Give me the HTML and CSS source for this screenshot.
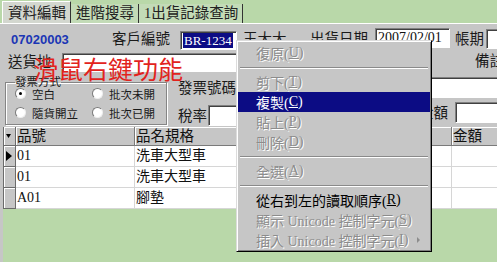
FILE: index.html
```html
<!DOCTYPE html>
<html lang="zh-Hant">
<head>
    <meta charset="UTF-8">
    <title>出貨資料編輯</title>
    <link rel="stylesheet" href="styles.css">
</head>
<body>
    <div class="window">
        <!-- Tabs -->
        <div class="tabs">
            <div class="tab active">資料編輯</div>
            <div class="tab">進階搜尋</div>
            <div class="tab">1出貨記錄查詢</div>
        </div>

        <!-- Header form -->
        <div class="form">
            <div class="row row1">
                <span class="order-no">07020003</span>
                <span class="lbl w-cust">客戶編號</span>
                <span class="field f-cust"><span class="sel">BR-1234</span></span>
                <span class="lbl w-name">王大大</span>
                <span class="lbl w-date">出貨日期</span>
                <span class="field f-date">2007/02/01</span>
                <span class="lbl w-term">帳期</span>
                <span class="field f-term"></span>
            </div>
            <div class="row row2">
                <span class="lbl w-addr">送貨地</span>
                <span class="field f-addr"></span>
                <span class="lbl memo-lbl">備註</span>
            </div>
            <div class="row row3">
                <fieldset class="invoice">
                    <legend>發票方式</legend>
                    <div class="radios">
                        <span class="radio"><span class="dot on"></span>空白</span>
                        <span class="radio"><span class="dot"></span>批次未開</span>
                        <span class="radio"><span class="dot"></span>隨貨開立</span>
                        <span class="radio"><span class="dot"></span>批次已開</span>
                    </div>
                </fieldset>
                <div class="mid">
                    <div class="lbl inv-no">發票號碼</div>
                    <div class="tax">
                        <span class="lbl">稅率</span>
                        <span class="field f-tax"></span>
                    </div>
                </div>
                <div class="side">
                    <span class="field f-memo"></span>
                    <div class="amt">
                        <span class="lbl">金額</span>
                        <span class="field f-amt"></span>
                    </div>
                </div>
            </div>
        </div>

        <!-- Detail grid -->
        <div class="lower">
            <table class="grid">
                <colgroup>
                    <col style="width:12px">
                    <col style="width:119px">
                    <col style="width:165px">
                    <col style="width:100px">
                    <col style="width:52px">
                    <col style="width:80px">
                </colgroup>
                <tr>
                    <th class="rh"><svg width="5" height="4" viewBox="0 0 5 4"><path d="M0 0h5L2.5 4z" fill="#000"/></svg></th>
                    <th>品號</th>
                    <th>品名規格</th>
                    <th>數量</th>
                    <th>單價</th>
                    <th>金額</th>
                </tr>
                <tr>
                    <td class="rh"><svg width="6" height="10" viewBox="0 0 6 10"><path d="M0 0L6 5L0 10z" fill="#000"/></svg></td>
                    <td>01</td>
                    <td>洗車大型車</td>
                    <td></td>
                    <td></td>
                    <td></td>
                </tr>
                <tr>
                    <td class="rh"></td>
                    <td>01</td>
                    <td>洗車大型車</td>
                    <td></td>
                    <td></td>
                    <td></td>
                </tr>
                <tr>
                    <td class="rh"></td>
                    <td>A01</td>
                    <td>腳墊</td>
                    <td></td>
                    <td></td>
                    <td></td>
                </tr>
            </table>
        </div>

        <div class="caption">滑鼠右鍵功能</div>

        <!-- Context menu -->
        <div class="menu">
            <div class="menu-item off">復原(<u>U</u>)</div>
            <div class="menu-sep"></div>
            <div class="menu-item off">剪下(<u>T</u>)</div>
            <div class="menu-item hot">複製(<u>C</u>)</div>
            <div class="menu-item off">貼上(<u>P</u>)</div>
            <div class="menu-item off">刪除(<u>D</u>)</div>
            <div class="menu-sep"></div>
            <div class="menu-item off">全選(<u>A</u>)</div>
            <div class="menu-sep"></div>
            <div class="menu-item">從右到左的讀取順序(<u>R</u>)</div>
            <div class="menu-item off">顯示 Unicode 控制字元(<u>S</u>)</div>
            <div class="menu-item off">插入 Unicode 控制字元(<u>I</u>)<span class="sub-arrow"></span></div>
        </div>
    </div>
</body>
</html>
```

FILE: styles.css
```css
body {
    margin: 0;
    font-family: "Liberation Serif", "Noto Sans CJK TC", serif;
    font-size: 14px;
    color: #111;
}
.window {
    position: relative;
    width: 497px;
    height: 262px;
    overflow: hidden;
    background: #b9d8a9;
}

/* tabs */
.tabs {
    display: flex;
    align-items: flex-end;
    height: 23px;
    padding-left: 2px;
}
.tab {
    height: 19px;
    line-height: 19px;
    padding: 0 4px 0 5px;
    font-size: 14.5px;
    color: #222;
    background: #c3dbb7;
    border-right: 1px solid #333;
    box-sizing: border-box;
    white-space: nowrap;
}
.tab.active {
    height: 22px;
    line-height: 22px;
    background: #d3d7cf;
    border-left: 1px solid #fff;
    border-top: 1px solid #fff;
}

/* form */
.form {
    height: 104px;
    background: #c6c6c6;
    border-top: 1px solid #fff;
    box-sizing: border-box;
}
.row {
    display: flex;
    align-items: center;
}
.row > * {
    flex-shrink: 0;
}
.row1 {
    height: 22px;
    margin-top: 4px;
}
.row2 {
    height: 20px;
    margin-top: 2px;
}
.row3 {
    height: 55px;
    align-items: flex-start;
}
.lbl {
    font-size: 14.5px;
    line-height: 16px;
    white-space: nowrap;
    color: #1a1a1a;
}
.field {
    display: block;
    height: 20px;
    background: #fff;
    box-sizing: border-box;
    border: 1px solid;
    border-color: #808080 #fff #fff #808080;
    box-shadow: inset 1px 1px #404040;
    white-space: nowrap;
    overflow: hidden;
}
.order-no {
    width: 112px;
    padding-left: 11px;
    box-sizing: border-box;
    font-family: "Liberation Sans", sans-serif;
    font-weight: bold;
    font-size: 13px;
    color: #1b36b5;
}
.w-cust { width: 68px; }
.f-cust {
    width: 57px;
    height: 19px;
    margin-top: 2px;
    padding: 1px 0 0 2px;
}
.sel {
    display: inline-block;
    background: #0c0c84;
    color: #fff;
    font-size: 13px;
    line-height: 15px;
    padding: 0 1px;
}
.w-name {
    width: 67px;
    margin-left: 6px;
}
.w-date { width: 65px; }
.f-date {
    width: 75px;
    margin-top: -2px;
    padding: 1px 0 0 2px;
    font-size: 14px;
    line-height: 16px;
}
.w-term {
    width: 31px;
    margin-left: 5px;
}
.f-term { width: 40px; }
.w-addr {
    width: 54px;
    margin-left: 8px;
}
.f-addr {
    width: 340px;
    height: 19px;
    margin-top: 1px;
}
.memo-lbl {
    margin-left: 73px;
    margin-top: -3px;
}

/* invoice group */
.invoice {
    margin: 4px 0 0 5px;
    padding: 0 0 0 9px;
    width: 162px;
    height: 49px;
    box-sizing: border-box;
    border: 1px solid #858585;
    box-shadow: inset 1px 1px #fff, 1px 1px #fff;
}
.invoice legend {
    padding: 0;
    font-size: 11.5px;
    line-height: 12px;
    color: #1a1a1a;
}
.radios {
    display: grid;
    grid-template-columns: 77px 70px;
    grid-auto-rows: 19px;
    margin-top: -4px;
}
.radio {
    display: flex;
    align-items: center;
    font-size: 11.5px;
    white-space: nowrap;
    color: #1a1a1a;
}
.dot {
    position: relative;
    width: 11px;
    height: 11px;
    margin-right: 6px;
    border-radius: 50%;
    background: #fff;
    box-sizing: border-box;
    border: 1px solid;
    border-color: #7a7a7a #eee #eee #7a7a7a;
}
.dot.on::after {
    content: "";
    position: absolute;
    left: 3px;
    top: 3px;
    width: 3px;
    height: 3px;
    border-radius: 50%;
    background: #000;
}
.mid {
    width: 152px;
    margin-left: 11px;
}
.inv-no {
    margin-top: 8px;
}
.tax {
    display: flex;
    align-items: center;
    margin-top: 9px;
}
.tax .lbl { width: 30px; }
.f-tax {
    width: 90px;
    height: 21px;
}
.side {
    flex: 1;
}
.f-memo {
    width: 180px;
    height: 21px;
    margin-top: 5px;
}
.amt {
    display: flex;
    align-items: center;
    margin-top: 4px;
    padding-left: 89px;
}
.amt .lbl { width: 36px; }
.f-amt {
    width: 60px;
    height: 21px;
}

/* grid */
.lower {
    border-left: 3px solid #c6c6c6;
    height: 135px;
}
.grid {
    border-collapse: collapse;
    table-layout: fixed;
    width: 528px;
    border-left: 1px solid #6b6b6b;
}
.grid th,
.grid td {
    padding: 0 0 0 1px;
    text-align: left;
    font-weight: normal;
    white-space: nowrap;
    overflow: hidden;
    line-height: 16px;
}
.grid th {
    height: 18px;
    font-size: 14.5px;
    background: #c6c6c6;
    border-right: 1px solid #7a7a7a;
    border-bottom: 1px solid #7a7a7a;
    box-shadow: inset 1px 1px #fff;
}
.grid td {
    height: 20px;
    font-size: 14px;
    background: #fff;
    border-right: 1px solid #d6d6d6;
    border-bottom: 1px solid #d6d6d6;
}
.grid .rh {
    padding: 0 0 0 2px;
    background: #c6c6c6;
    border-right: 1px solid #6b6b6b;
    border-bottom: 1px solid #6b6b6b;
    box-shadow: inset 1px 1px #fff;
}
.grid .rh svg {
    display: block;
}

/* red caption */
.caption {
    position: absolute;
    left: 33px;
    top: 56px;
    font-family: "Noto Sans CJK TC", sans-serif;
    font-size: 25px;
    line-height: 25px;
    color: #e2231d;
    white-space: nowrap;
}

/* context menu */
.menu {
    position: absolute;
    left: 236px;
    top: 40px;
    width: 196px;
    height: 212px;
    box-sizing: border-box;
    padding: 2px 1px;
    background: #c6c6c6;
    border: 1px solid;
    border-color: #dcdcdc #000 #000 #dcdcdc;
    box-shadow: inset 1px 1px #fff, inset -1px -1px #808080;
    font-size: 14px;
}
.menu-item {
    display: flex;
    align-items: center;
    height: 20px;
    padding: 0 10px 0 18px;
    white-space: nowrap;
    color: #000;
}
.menu-item u {
    text-underline-offset: 1px;
}
.menu-item.hot {
    background: #0c0c84;
    color: #fff;
}
.menu-item.off {
    color: #8c8c8c;
    text-shadow: 1px 1px 0 #fff;
}
.menu-sep {
    height: 0;
    margin: 4px 2px 3px;
    border-top: 1px solid #8a8a8a;
    border-bottom: 1px solid #fff;
}
.sub-arrow {
    margin-left: auto;
    width: 0;
    height: 0;
    border-left: 3px solid #8c8c8c;
    border-top: 3px solid transparent;
    border-bottom: 3px solid transparent;
}
```
